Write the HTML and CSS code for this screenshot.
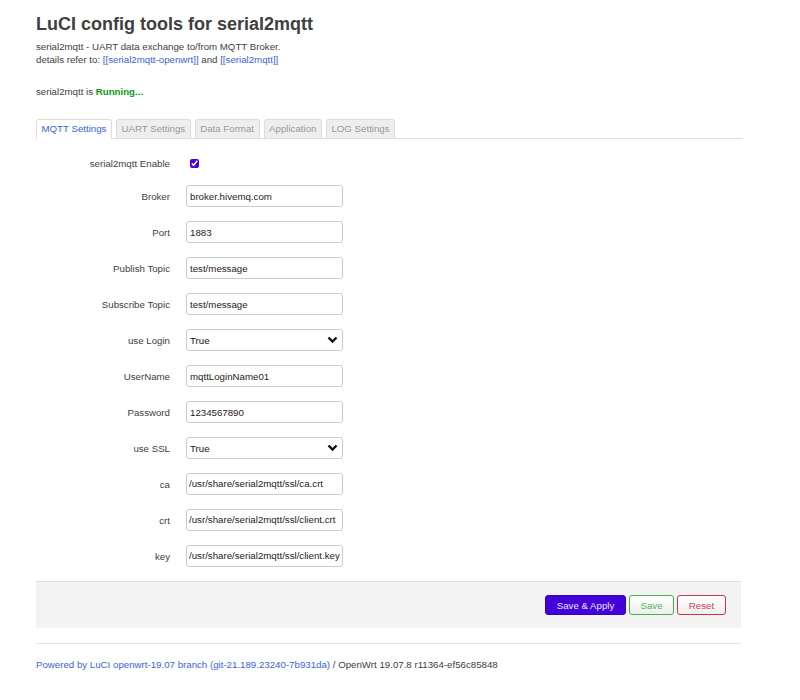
FILE: index.html
```html
<!DOCTYPE html>
<html>
<head>
<meta charset="utf-8">
<title>serial2mqtt</title>
<link rel="stylesheet" href="styles.css">
</head>
<body>
<div class="page">
  <h2 class="title">LuCI config tools for serial2mqtt</h2>
  <div class="desc">
    <div>serial2mqtt - UART data exchange to/from MQTT Broker.</div>
    <div>details refer to: <a href="#">[[serial2mqtt-openwrt]]</a> and <a href="#">[[serial2mqtt]]</a></div>
  </div>
  <div class="status">serial2mqtt is <b class="running">Running...</b></div>

  <ul class="tabs">
    <li class="tab active">MQTT Settings</li>
    <li class="tab">UART Settings</li>
    <li class="tab">Data Format</li>
    <li class="tab">Application</li>
    <li class="tab">LOG Settings</li>
  </ul>

  <div class="form">
    <div class="row"><label class="lbl">serial2mqtt Enable</label><div class="field"><input type="checkbox" class="chk" checked></div></div>
    <div class="row"><label class="lbl">Broker</label><div class="field"><input class="txt" type="text" value="broker.hivemq.com"></div></div>
    <div class="row"><label class="lbl">Port</label><div class="field"><input class="txt" type="text" value="1883"></div></div>
    <div class="row"><label class="lbl">Publish Topic</label><div class="field"><input class="txt" type="text" value="test/message"></div></div>
    <div class="row"><label class="lbl">Subscribe Topic</label><div class="field"><input class="txt" type="text" value="test/message"></div></div>
    <div class="row"><label class="lbl">use Login</label><div class="field"><div class="sel"><span>True</span><svg class="chev" width="11" height="8" viewBox="0 0 11 8"><path d="M1.5 1.5 L5.5 5.5 L9.5 1.5" fill="none" stroke="#111" stroke-width="2.4"/></svg></div></div></div>
    <div class="row"><label class="lbl">UserName</label><div class="field"><input class="txt" type="text" value="mqttLoginName01"></div></div>
    <div class="row"><label class="lbl">Password</label><div class="field"><input class="txt" type="text" value="1234567890"></div></div>
    <div class="row"><label class="lbl">use SSL</label><div class="field"><div class="sel"><span>True</span><svg class="chev" width="11" height="8" viewBox="0 0 11 8"><path d="M1.5 1.5 L5.5 5.5 L9.5 1.5" fill="none" stroke="#111" stroke-width="2.4"/></svg></div></div></div>
    <div class="row"><label class="lbl">ca</label><div class="field"><div class="txt path">/usr/share/serial2mqtt/ssl/ca.crt</div></div></div>
    <div class="row"><label class="lbl">crt</label><div class="field"><div class="txt path">/usr/share/serial2mqtt/ssl/client.crt</div></div></div>
    <div class="row"><label class="lbl">key</label><div class="field"><div class="txt path">/usr/share/serial2mqtt/ssl/client.key</div></div></div>
  </div>

  <div class="actions">
    <button class="btn apply">Save &amp; Apply</button>
    <button class="btn save">Save</button>
    <button class="btn reset">Reset</button>
  </div>

  <footer class="footer">
    <a href="#">Powered by LuCI openwrt-19.07 branch (git-21.189.23240-7b931da)</a> / OpenWrt 19.07.8 r11364-ef56c85848
  </footer>
</div>
</body>
</html>
```

FILE: styles.css
```css
html, body {
  margin: 0;
  padding: 0;
  background: #fff;
}
body {
  font-family: "Liberation Sans", Arial, sans-serif;
  font-size: 9.7px;
  color: #404040;
}
.page {
  padding: 12px 0 0 36px;
  width: 705px;
}
.title {
  margin: 0;
  font-size: 18px;
  line-height: 24px;
  font-weight: bold;
  color: #404040;
}
.desc {
  margin-top: 4px;
  line-height: 13px;
}
a {
  color: #3a63dc;
  text-decoration: none;
}
.status {
  margin-top: 19px;
  line-height: 13px;
}
.running {
  color: #0a9a0a;
}
.tabs {
  list-style: none;
  margin: 21px 0 0 0;
  padding: 0;
  display: flex;
  gap: 4px;
  border-bottom: 1px solid #ddd;
  width: 707px;
}
.tab {
  height: 18px;
  line-height: 18px;
  padding: 0 4.5px;
  margin-bottom: -1px;
  border: 1px solid #ddd;
  border-bottom: none;
  border-radius: 3px 3px 0 0;
  background: #eee;
  color: #999;
}
.tab.active {
  background: #fff;
  color: #3a63dc;
  height: 19px;
}
.form {
  padding-top: 9px;
  padding-bottom: 6px;
}
.row {
  display: flex;
  align-items: center;
  height: 36px;
}
.row:first-child {
  height: 30px;
}
.lbl {
  width: 134px;
  text-align: right;
  padding-right: 16px;
}
.field {
  display: flex;
  align-items: center;
}
.chk {
  margin: 0 0 0 4px;
  width: 9px;
  height: 9px;
  accent-color: #4a00e0;
}
.txt {
  box-sizing: border-box;
  width: 157px;
  height: 22px;
  border: 1px solid #ccc;
  border-radius: 3px;
  padding: 0 3px;
  font-family: "Liberation Sans", Arial, sans-serif;
  font-size: 9.7px;
  color: #2a1820;
  background: #fff;
  outline: none;
  margin: 0;
}
.path {
  line-height: 20px;
  padding: 0 0 0 2px;
  white-space: nowrap;
  overflow: hidden;
  color: #222;
}
.sel {
  box-sizing: border-box;
  width: 157px;
  height: 22px;
  border: 1px solid #ccc;
  border-radius: 3px;
  padding: 0 4px 0 3px;
  display: flex;
  align-items: center;
  justify-content: space-between;
  color: #111;
}
.actions {
  margin-top: 1px;
  background: #f3f3f3;
  border-top: 1px solid #ddd;
  height: 46px;
  display: flex;
  justify-content: flex-end;
  align-items: center;
  gap: 3px;
  padding-right: 15px;
}
.btn {
  font-family: "Liberation Sans", Arial, sans-serif;
  font-size: 9.7px;
  height: 20px;
  border-radius: 3px;
  padding: 0;
  white-space: nowrap;
  cursor: pointer;
}
.btn.apply {
  background: #4400d8;
  border: 1px solid #3a00c0;
  color: #e8e8ff;
  width: 81px;
}
.btn.save {
  background: linear-gradient(#fff, #eee);
  border: 1px solid #3cb84a;
  color: #4cb85a;
  width: 45px;
}
.btn.reset {
  background: linear-gradient(#fff, #eee);
  border: 1px solid #c8344a;
  color: #d04060;
  width: 49px;
}
.footer {
  margin-top: 15px;
  border-top: 1px solid #e5e5e5;
  padding-top: 14px;
  line-height: 13px;
}
```
